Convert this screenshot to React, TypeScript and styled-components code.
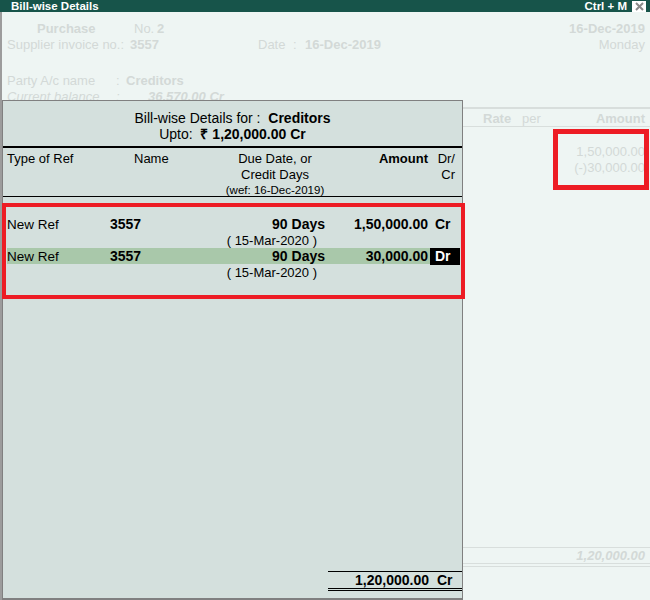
import React from 'react'
import styled, { createGlobalStyle } from 'styled-components'

const GlobalStyle = createGlobalStyle`
	body {
		margin: 0;
		font-family: 'Liberation Sans', Arial, sans-serif;
		font-size: 13px;
		color: #000;
	}
`

const Window = styled.div`
	position: relative;
	width: 650px;
	height: 600px;
	display: flex;
	flex-direction: column;
	background: #eef5f3;
	overflow: hidden;
`

const TitleBar = styled.div`
	height: 12px;
	display: flex;
	align-items: center;
	background: #17544a;
	color: #fff;
	font-weight: bold;
	font-size: 11.5px;
	line-height: 12px;
	padding-left: 11px;
`

const TitleRight = styled.div`
	margin-left: auto;
	display: flex;
	align-items: center;
	gap: 5px;
	padding-right: 4px;
`

const CloseBox = styled.span`
	width: 14px;
	height: 11px;
	background: #fff;
	display: flex;
	align-items: center;
	justify-content: center;
	margin-top: 1px;
`

const Body = styled.div`
	flex: 1;
	display: flex;
	flex-direction: column;
	border-left: 2px solid #9c9c9c;
	min-height: 0;
`

const Info = styled.div`
	height: 88px;
	padding: 9px 5px 0 5px;
	box-sizing: border-box;
	overflow: hidden;
	color: #d3d9d7;
`

const InfoLine = styled.div<{ $gap?: number; $italic?: boolean }>`
	display: flex;
	height: 16px;
	line-height: 16px;
	margin-top: ${(p) => p.$gap ?? 0}px;
	font-style: ${(p) => (p.$italic ? 'italic' : 'normal')};
	white-space: nowrap;
`

const Cell = styled.span<{ $w?: number; $bold?: boolean; $right?: boolean }>`
	display: inline-block;
	width: ${(p) => (p.$w ? `${p.$w}px` : 'auto')};
	font-weight: ${(p) => (p.$bold ? 'bold' : 'normal')};
	margin-left: ${(p) => (p.$right ? 'auto' : '0')};
`

const Lower = styled.div`
	flex: 1;
	display: flex;
	min-height: 0;
`

const Panel = styled.div`
	width: 461px;
	box-sizing: border-box;
	display: flex;
	flex-direction: column;
	background: #d4e0dd;
	border: 1px solid #808080;
	border-bottom-width: 2px;
`

const PanelHead = styled.div`
	height: 47px;
	box-sizing: border-box;
	padding-top: 9px;
	text-align: center;
	font-size: 14px;
	line-height: 16px;
	border-bottom: 2px solid #000;
`

const ColHead = styled.div`
	display: grid;
	grid-template-columns: 103px 115px 100px 105px 30px;
	margin-left: 4px;
	padding-top: 3px;
	height: 49px;
	box-sizing: border-box;
	line-height: 16px;
	position: relative;
	&::after {
		content: '';
		position: absolute;
		left: -4px;
		right: 0;
		bottom: 0;
		border-bottom: 1px solid #000;
	}
`

const HeadCell = styled.div<{ $align?: string; $pl?: number; $pr?: number; $bold?: boolean }>`
	text-align: ${(p) => p.$align ?? 'left'};
	padding-left: ${(p) => p.$pl ?? 0}px;
	padding-right: ${(p) => p.$pr ?? 0}px;
	font-weight: ${(p) => (p.$bold ? 'bold' : 'normal')};
`

const Small = styled.div`
	font-size: 11.5px;
	line-height: 14px;
	margin: 0 -6px;
`

const Entries = styled.div`
	margin-left: 4px;
	padding-top: 19px;
	flex: 1;
`

const EntryRow = styled.div<{ $active?: boolean }>`
	display: grid;
	grid-template-columns: 103px 115px 100px 105px 30px;
	height: 16px;
	line-height: 17px;
	background: ${(p) => (p.$active ? 'linear-gradient(to right, #a9c8aa 423px, transparent 423px)' : 'none')};
`

const EntryCell = styled.div<{ $bold?: boolean; $right?: boolean; $pr?: number }>`
	font-weight: ${(p) => (p.$bold ? 'bold' : 'normal')};
	font-size: ${(p) => (p.$bold ? '14px' : '13.5px')};
	text-align: ${(p) => (p.$right ? 'right' : 'left')};
	padding-right: ${(p) => p.$pr ?? 0}px;
	white-space: nowrap;
`

const Side = styled.div<{ $active?: boolean }>`
	font-weight: bold;
	font-size: 14px;
	padding-left: 5px;
	background: ${(p) => (p.$active ? '#000' : 'none')};
	color: ${(p) => (p.$active ? '#fff' : '#000')};
`

const SubLine = styled.div`
	display: grid;
	grid-template-columns: 218px 100px;
	height: 16px;
	line-height: 17px;
	& > span:last-child {
		text-align: right;
		padding-right: 8px;
		white-space: nowrap;
	}
`

const TotalBox = styled.div`
	align-self: flex-end;
	width: 134px;
	margin-bottom: 7px;
	display: grid;
	grid-template-columns: 1fr 32px;
	font-size: 14px;
	line-height: 16px;
	font-weight: bold;
	border-top: 1px solid #000;
	border-bottom: 3px double #000;
	& > span:first-child {
		text-align: right;
		padding-right: 1px;
	}
	& > span:last-child {
		padding-left: 7px;
	}
`

const Voucher = styled.div`
	flex: 1;
	display: flex;
	flex-direction: column;
	padding-top: 7px;
	color: #d3d9d7;
`

const VoucherHead = styled.div`
	display: flex;
	height: 17px;
	line-height: 19px;
	border-top: 2px solid #d8dedc;
	border-bottom: 1px solid #d8dedc;
	padding: 0 5px 0 20px;
`

const VoucherValues = styled.div`
	margin-top: 17px;
	padding-right: 5px;
	text-align: right;
	line-height: 16px;
	flex: 1;
`

const VoucherTotal = styled.div`
	margin-bottom: 33px;
	text-align: right;
	padding-right: 5px;
	line-height: 16px;
	height: 15px;
	font-style: italic;
	font-weight: bold;
	border-top: 1px solid #d8dedc;
	border-bottom: 4px double #d8dedc;
`

const Mark = styled.div<{ $x: number; $y: number; $w: number; $h: number; $b: number }>`
	position: absolute;
	left: ${(p) => p.$x}px;
	top: ${(p) => p.$y}px;
	width: ${(p) => p.$w}px;
	height: ${(p) => p.$h}px;
	border: ${(p) => p.$b}px solid #ed1c24;
	box-sizing: border-box;
	pointer-events: none;
`

const entries = [
	{ type: 'New Ref', name: '3557', days: '90 Days', due: '( 15-Mar-2020 )', amount: '1,50,000.00', side: 'Cr', active: false },
	{ type: 'New Ref', name: '3557', days: '90 Days', due: '( 15-Mar-2020 )', amount: '30,000.00', side: 'Dr', active: true },
]

export default function App(): React.ReactNode {
	return (
		<>
			<GlobalStyle />
			<Window>
				<TitleBar>
					<span>Bill-wise Details</span>
					<TitleRight>
						<span>Ctrl + M</span>
						<CloseBox>
							<svg width="9" height="9" viewBox="0 0 9 9">
								<path d="M1 1 L8 8 M8 1 L1 8" stroke="#8a8a8a" strokeWidth="2" />
							</svg>
						</CloseBox>
					</TitleRight>
				</TitleBar>
				<Body>
					<Info>
						<InfoLine>
							<Cell $w={30} />
							<Cell $w={97} $bold>Purchase</Cell>
							<Cell $w={23}>No.</Cell>
							<Cell $bold>2</Cell>
							<Cell $right $bold>16-Dec-2019</Cell>
						</InfoLine>
						<InfoLine>
							<Cell $w={123}>Supplier invoice no.:</Cell>
							<Cell $w={128} $bold>3557</Cell>
							<Cell $w={35}>Date</Cell>
							<Cell $w={12}>:</Cell>
							<Cell $bold>16-Dec-2019</Cell>
							<Cell $right>Monday</Cell>
						</InfoLine>
						<InfoLine $gap={20}>
							<Cell $w={109}>Party A/c name</Cell>
							<Cell $w={10}>:</Cell>
							<Cell $bold>Creditors</Cell>
						</InfoLine>
						<InfoLine $italic>
							<Cell $w={109}>Current balance</Cell>
							<Cell $w={32}>:</Cell>
							<Cell $bold>36,570.00 Cr</Cell>
						</InfoLine>
					</Info>
					<Lower>
						<Panel>
							<PanelHead>
								<div>
									Bill-wise Details for :&nbsp; <b>Creditors</b>
								</div>
								<div>
									Upto:&nbsp; <b>₹ 1,20,000.00 Cr</b>
								</div>
							</PanelHead>
							<ColHead>
								<HeadCell>Type of Ref</HeadCell>
								<HeadCell $pl={24}>Name</HeadCell>
								<HeadCell $align="center">
									<div>Due Date, or</div>
									<div>Credit Days</div>
									<Small>(wef: 16-Dec-2019)</Small>
								</HeadCell>
								<HeadCell $align="right" $pr={2} $bold>
									Amount
								</HeadCell>
								<HeadCell $align="right" $pr={5}>
									<div>Dr/</div>
									<div>Cr</div>
								</HeadCell>
							</ColHead>
							<Entries>
								{entries.map((e, i) => (
									<div key={i}>
										<EntryRow $active={e.active}>
											<EntryCell>{e.type}</EntryCell>
											<EntryCell $bold>{e.name}</EntryCell>
											<EntryCell $bold $right>
												{e.days}
											</EntryCell>
											<EntryCell $bold $right $pr={2}>
												{e.amount}
											</EntryCell>
											<Side $active={e.active}>{e.side}</Side>
										</EntryRow>
										<SubLine>
											<span />
											<span>{e.due}</span>
										</SubLine>
									</div>
								))}
							</Entries>
							<TotalBox>
								<span>1,20,000.00</span>
								<span>Cr</span>
							</TotalBox>
						</Panel>
						<Voucher>
							<VoucherHead>
								<Cell $w={39} $bold>Rate</Cell>
								<Cell>per</Cell>
								<Cell $right $bold>Amount</Cell>
							</VoucherHead>
							<VoucherValues>
								<div>1,50,000.00</div>
								<div>(-)30,000.00</div>
							</VoucherValues>
							<VoucherTotal>1,20,000.00</VoucherTotal>
						</Voucher>
					</Lower>
				</Body>
				<Mark $x={2} $y={203} $w={463} $h={96} $b={4} />
				<Mark $x={553} $y={129} $w={96} $h={61} $b={5} />
			</Window>
		</>
	)
}
